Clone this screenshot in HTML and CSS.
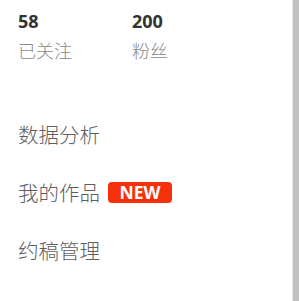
FILE: index.html
```html
<!DOCTYPE html>
<html>
<head>
<meta charset="utf-8">
<link rel="stylesheet" href="styles.css">
</head>
<body>
<div class="page">
  <div class="main">
    <div class="stats">
      <div class="stat">
        <div class="num">58</div>
        <div class="label">已关注</div>
      </div>
      <div class="stat">
        <div class="num">200</div>
        <div class="label">粉丝</div>
      </div>
    </div>
    <ul class="menu">
      <li class="item">数据分析</li>
      <li class="item">我的作品<span class="badge">NEW</span></li>
      <li class="item">约稿管理</li>
    </ul>
  </div>
  <div class="scrollbar"><div class="thumb"></div></div>
</div>
</body>
</html>
```
FILE: styles.css
```css
html, body {
  margin: 0;
  padding: 0;
  background: #fff;
}
.page {
  display: flex;
  width: 299px;
  height: 301px;
  overflow: hidden;
  font-family: "Open Sans", "Noto Sans CJK SC", sans-serif;
}
.main {
  flex: 1;
  padding-left: 18px;
}
.stats {
  display: flex;
  padding-top: 8px;
}
.stat {
  width: 114px;
}
.num {
  font-size: 18px;
  font-weight: 700;
  color: #333;
  line-height: 26px;
}
.label {
  font-family: "Noto Sans CJK SC", sans-serif;
  font-weight: 300;
  font-size: 18px;
  color: #8a8a8a;
  line-height: 24px;
  margin-top: 4px;
}
.menu {
  list-style: none;
  margin: 0;
  padding: 0;
  padding-top: 43px;
}
.item {
  display: flex;
  align-items: center;
  font-family: "Noto Sans CJK SC", sans-serif;
  font-weight: 300;
  font-size: 20.5px;
  color: #5e5e5e;
  height: 58px;
}
.badge {
  margin-left: 8px;
  background: #f5300c;
  color: #fff;
  font-family: "Open Sans", sans-serif;
  font-weight: 700;
  font-size: 17.5px;
  line-height: 21px;
  height: 21px;
  width: 64px;
  text-align: center;
  border-radius: 4px;
}
.scrollbar {
  width: 6px;
  border-left: 1px solid #e8e8e8;
  background: #f4f4f4;
  display: flex;
}
.thumb {
  flex: 1;
  background: #c1c1c1;
}
```
